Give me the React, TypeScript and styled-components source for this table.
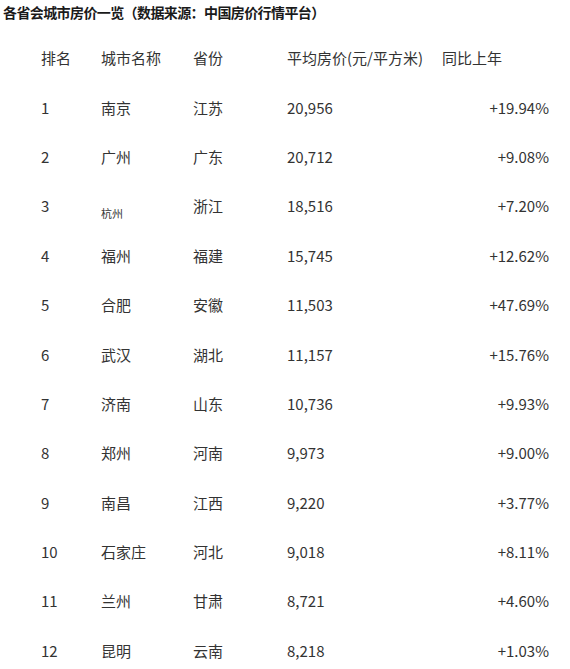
import styled, { createGlobalStyle } from "styled-components";

const GlobalStyle = createGlobalStyle`
  body {
    margin: 0;
    background: #ffffff;
    font-family: "Noto Sans CJK SC", "Noto Sans", sans-serif;
    color: #333333;
  }
`;

type Row = {
  rank: number;
  city: string;
  province: string;
  price: string;
  change: string;
  small?: boolean;
};

const rows: Row[] = [
  { rank: 1, city: "南京", province: "江苏", price: "20,956", change: "+19.94%" },
  { rank: 2, city: "广州", province: "广东", price: "20,712", change: "+9.08%" },
  { rank: 3, city: "杭州", province: "浙江", price: "18,516", change: "+7.20%", small: true },
  { rank: 4, city: "福州", province: "福建", price: "15,745", change: "+12.62%" },
  { rank: 5, city: "合肥", province: "安徽", price: "11,503", change: "+47.69%" },
  { rank: 6, city: "武汉", province: "湖北", price: "11,157", change: "+15.76%" },
  { rank: 7, city: "济南", province: "山东", price: "10,736", change: "+9.93%" },
  { rank: 8, city: "郑州", province: "河南", price: "9,973", change: "+9.00%" },
  { rank: 9, city: "南昌", province: "江西", price: "9,220", change: "+3.77%" },
  { rank: 10, city: "石家庄", province: "河北", price: "9,018", change: "+8.11%" },
  { rank: 11, city: "兰州", province: "甘肃", price: "8,721", change: "+4.60%" },
  { rank: 12, city: "昆明", province: "云南", price: "8,218", change: "+1.03%" },
];

function App() {
  return (
    <Page>
      <GlobalStyle />
      <Title>各省会城市房价一览（数据来源：中国房价行情平台）</Title>
      <Table>
        <colgroup>
          <col style={{ width: 60 }} />
          <col style={{ width: 92 }} />
          <col style={{ width: 94 }} />
          <col style={{ width: 155 }} />
          <col style={{ width: 107 }} />
        </colgroup>
        <thead>
          <tr>
            <Head>排名</Head>
            <Head>城市名称</Head>
            <Head>省份</Head>
            <Head>平均房价(元/平方米)</Head>
            <Head>同比上年</Head>
          </tr>
        </thead>
        <tbody>
          {rows.map((r) => (
            <tr key={r.rank}>
              <Cell>{r.rank}</Cell>
              <Cell>{r.small ? <SmallCity>{r.city}</SmallCity> : r.city}</Cell>
              <Cell>{r.province}</Cell>
              <Cell>{r.price}</Cell>
              <Cell $right>{r.change}</Cell>
            </tr>
          ))}
        </tbody>
      </Table>
    </Page>
  );
}

const Page = styled.div`
  width: 570px;
  height: 669px;
  overflow: hidden;
`;

const Title = styled.div`
  padding-left: 3px;
  height: 24px;
  line-height: 24px;
  font-size: 14px;
  font-weight: bold;
  color: #1a1a1a;
  letter-spacing: -0.6px;
  white-space: nowrap;
`;

const Table = styled.table`
  margin-top: 9px;
  margin-left: 41px;
  border-collapse: collapse;
  table-layout: fixed;
  font-size: 15px;
`;

const Head = styled.th`
  height: 49.4px;
  padding: 0;
  text-align: left;
  font-weight: normal;
  vertical-align: middle;
  white-space: nowrap;
`;

const Cell = styled.td<{ $right?: boolean }>`
  height: 49.4px;
  padding: 0;
  text-align: ${(p) => (p.$right ? "right" : "left")};
  vertical-align: middle;
  white-space: nowrap;
`;

const SmallCity = styled.span`
  display: inline-block;
  font-size: 11px;
  transform: translateY(6px);
`;

export default App;
